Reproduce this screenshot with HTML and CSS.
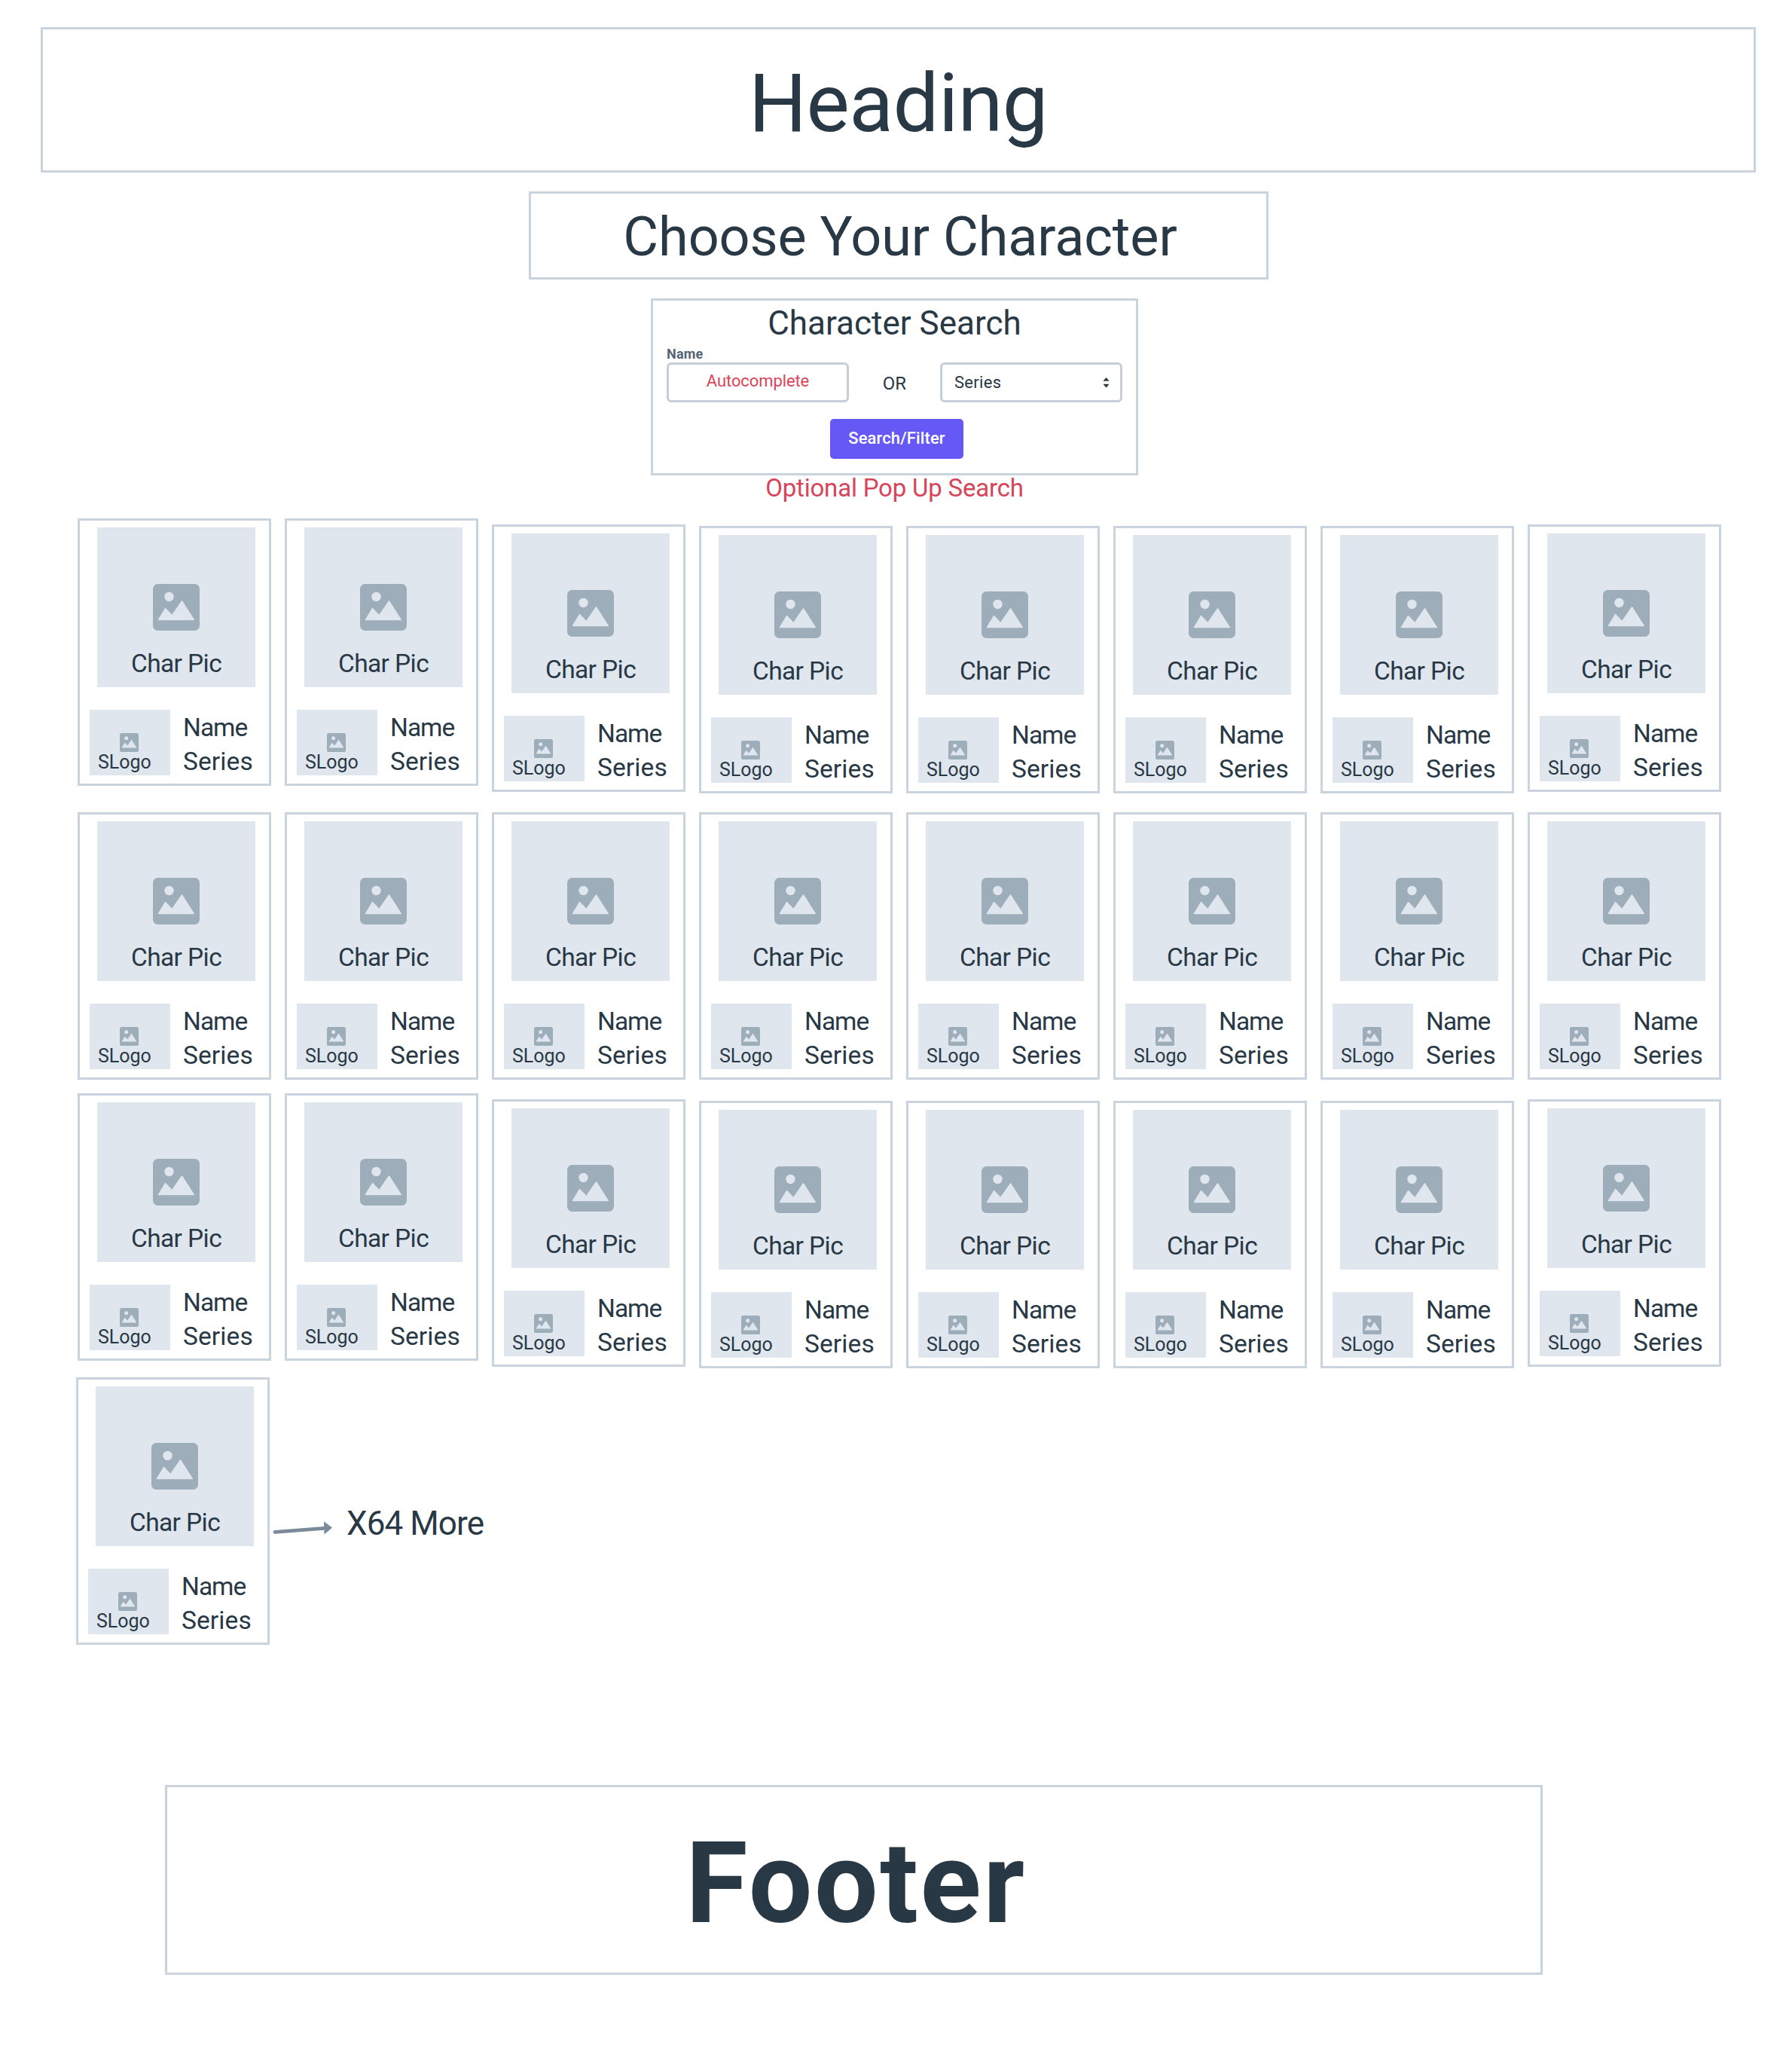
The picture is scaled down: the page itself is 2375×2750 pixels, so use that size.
FILE: index.html
```html
<!DOCTYPE html>
<html lang="en">
<head>
<meta charset="utf-8">
<title>Choose Your Character</title>
<link rel="stylesheet" href="styles.css">
</head>
<body>
<svg class="defs" aria-hidden="true">
  <symbol id="picture" viewBox="0 0 62 62">
    <rect class="icon-frame" width="62" height="62" rx="6.5"/>
    <circle class="icon-cut" cx="21.5" cy="17" r="6.2"/>
    <path class="icon-cut" d="M7.3 48.3 Q6.4 48.3 6.8 47.3 L15.9 32.2 Q16.4 31.4 17 32.1 L25.3 40.8 L37.9 22.4 Q38.5 21.6 39.1 22.4 L54.9 47.3 Q55.3 48.3 54.4 48.3 Z"/>
  </symbol>
</svg>

<header class="box heading"><h1>Heading</h1></header>
<div class="box subheading"><h2>Choose Your Character</h2></div>

<form class="box search">
  <h3>Character Search</h3>
  <label class="field-label">Name</label>
  <div class="controls">
    <div class="field field-name">Autocomplete</div>
    <span class="or">OR</span>
    <div class="field field-series">
      <span>Series</span>
      <svg class="sorter" viewBox="0 0 9 14"><path d="M4.5 0 L8.6 4.8 H.4 Z M4.5 13.6 L8.6 8.8 H.4 Z"/></svg>
    </div>
  </div>
  <button class="submit" type="button">Search/Filter</button>
</form>
<p class="note">Optional Pop Up Search</p>

<main class="roster" id="roster"></main>

<footer class="box footer">Footer</footer>

<template id="card">
  <article class="card">
    <div class="pic">
      <svg class="pic-icon"><use href="#picture"/></svg>
      <span class="pic-caption">Char Pic</span>
    </div>
    <div class="info">
      <div class="logo">
        <svg class="logo-icon"><use href="#picture"/></svg>
        <span class="logo-caption">SLogo</span>
      </div>
      <div class="text">
        <div class="name">Name</div>
        <div class="series">Series</div>
      </div>
    </div>
  </article>
</template>
<template id="more">
  <svg class="arrow" viewBox="0 0 80 20"><path class="arrow-line" d="M3 14.3 L68 9.4"/><path class="arrow-head" d="M68 .3 L79 8.6 L68.5 17.6 Z"/></svg>
  <span class="more">X64 More</span>
</template>
<script src="roster.js"></script>
</body>
</html>
```
FILE: roster.js
```js
const roster = document.getElementById('roster');
const card = document.getElementById('card');
const rows = [
  { name: 'row-first', count: 8 },
  { name: 'row-level', count: 8 },
  { name: 'row-third', count: 8 },
  { name: 'row-last', count: 1 }
];

for (const { name, count } of rows) {
  const row = document.createElement('section');
  row.className = 'row ' + name;
  for (let i = 0; i < count; i++) row.append(card.content.cloneNode(true));
  roster.append(row);
}
roster.lastElementChild.append(document.getElementById('more').content.cloneNode(true));
```
FILE: styles.css
```css
* { box-sizing: border-box; }

body {
  margin: 0;
  padding-top: 36px;
  height: 2750px;
  background: #fff;
  color: #293845;
  font-family: Roboto, "Liberation Sans", sans-serif;
  line-height: 1;
}

h1, h2, h3, p { margin: 0; font-weight: 400; }
.defs { display: none; }
.box { border: 3px solid #c9d4de; text-align: center; }

.heading { width: 2277px; height: 193px; margin-left: 54px; padding-top: 44px; }
.heading h1 { font-size: 108px; letter-spacing: -0.5px; }

.subheading { width: 982px; height: 117px; margin: 25px 0 0 702px; padding: 22px 0 0 4px; }
.subheading h2 { font-size: 72px; letter-spacing: -0.1px; }

.search { width: 647px; height: 235px; margin: 25px 0 0 864px; padding: 8px 18px 0; }
.search h3 { font-size: 44px; }
.field-label {
  display: block;
  margin: 10px 0 2px;
  font-size: 18px;
  font-weight: 700;
  letter-spacing: 0.2px;
  text-align: left;
  color: #556575;
}
.controls { display: flex; justify-content: space-between; height: 53px; }
.field { width: 242px; border: 3px solid #c5cfd9; border-radius: 6px; font-size: 22px; }
.field-name { padding-top: 11px; letter-spacing: -0.1px; color: #dc4459; }
.or { padding-top: 16px; font-size: 24px; }
.field-series { display: flex; justify-content: space-between; padding: 13px 14px 0 16px; letter-spacing: 0.3px; }
.sorter { width: 9px; height: 14px; margin-top: 4px; fill: #293845; }
.submit {
  display: block;
  width: 177px;
  height: 53px;
  margin: 22px 0 0 217px;
  padding: 0 0 1px;
  border: 0;
  border-radius: 5px;
  background: #6558f5;
  color: #fff;
  font: 500 22px/1 Roboto, "Liberation Sans", sans-serif;
  letter-spacing: 0.1px;
}
.note { width: 647px; margin-left: 864px; text-align: center; font-size: 33px; letter-spacing: -0.2px; color: #d64559; }

.roster { margin-top: 24px; padding-left: 103px; }
.row { display: flex; align-items: flex-start; gap: 18px; }
.row-first { height: 390px; }
.row-level { height: 373px; }
.row-third { height: 377px; }
.row-last { height: 541px; gap: 0; margin-left: -2px; }

/* The first and third rows are staggered from the third card on. */
.row-first .card:nth-child(n+3), .row-third .card:nth-child(n+3) { margin-top: 10px; }
.row-first .card:nth-child(3), .row-first .card:nth-child(8),
.row-third .card:nth-child(3), .row-third .card:nth-child(8) { margin-top: 8px; }

.card { width: 257px; height: 355px; padding: 9px 0 0 13px; border: 3px solid #c9d4de; }
.pic {
  display: flex;
  flex-direction: column;
  align-items: center;
  width: 210px;
  height: 212px;
  margin-left: 10px;
  padding-top: 75px;
  background: #dfe6ee;
}
.icon-frame { fill: #9eadba; }
.icon-cut { fill: #dfe6ee; }
.pic-icon { width: 62px; height: 62px; }
.pic-caption { margin-top: 27px; font-size: 33.5px; letter-spacing: -0.6px; }
.info { display: flex; margin-top: 30px; }
.logo { width: 107px; height: 87px; padding: 31px 0 0 11px; background: #dfe6ee; }
.logo-icon { display: block; width: 25px; height: 25px; margin-left: 29px; }
.logo-caption { display: block; margin-top: 1px; font-size: 25px; }
.text { margin-left: 17px; padding-top: 1px; font-size: 33.5px; line-height: 45px; }
.name { letter-spacing: -1px; }
.series { letter-spacing: 0.1px; }

.arrow { width: 80px; height: 20px; margin: 191px 0 0 4px; }
.arrow-line { fill: none; stroke: #7b8b9a; stroke-width: 4.8; stroke-linecap: round; }
.arrow-head { fill: #7b8b9a; }
.more { margin: 172px 0 0 18px; font-size: 44px; letter-spacing: -0.9px; }

.footer {
  width: 1829px;
  height: 252px;
  margin-left: 219px;
  padding: 53px 0 0 6px;
  font-size: 150px;
  font-weight: 700;
  letter-spacing: 2.6px;
}
```
